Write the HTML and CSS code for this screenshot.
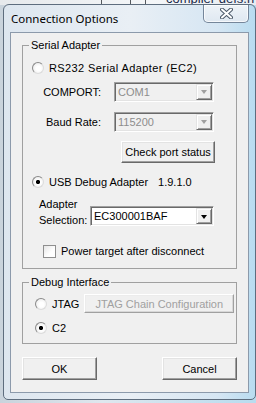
FILE: index.html
```html
<!DOCTYPE html>
<html lang="en">
<head>
    <title>Connection Options</title>
    <meta charset="UTF-8" />
    <link rel="stylesheet" href="styles.css">
</head>
<body>
    <div class="desk-strip">
        <span class="desk-bar bar-a"></span>
        <span class="desk-bar bar-b"></span>
        <span class="desk-bar bar-c"></span>
        <span class="desk-text">compiler defs.h</span>
    </div>

    <div class="window">
        <div class="titlebar">
            <span class="title">Connection Options</span>
            <div class="close-btn">
                <svg width="13" height="11" viewBox="0 0 13 11">
                    <path d="M2 1.5 L11 9.5 M11 1.5 L2 9.5" stroke="#4a5868" stroke-width="4" stroke-linecap="round" />
                    <path d="M2 1.5 L11 9.5 M11 1.5 L2 9.5" stroke="#ffffff" stroke-width="2" stroke-linecap="round" />
                </svg>
            </div>
        </div>

        <div class="client">
            <fieldset class="group serial">
                <legend>Serial Adapter</legend>

                <div class="radio-row rs232">
                    <span class="radio"></span>
                    <span>RS232 Serial Adapter (EC2)</span>
                </div>

                <div class="field-row comport">
                    <span class="field-label">COMPORT:</span>
                    <div class="combo disabled">
                        <span class="combo-text">COM1</span>
                        <span class="combo-arrow"><span class="tri"></span></span>
                    </div>
                </div>

                <div class="field-row baud">
                    <span class="field-label">Baud Rate:</span>
                    <div class="combo disabled">
                        <span class="combo-text">115200</span>
                        <span class="combo-arrow"><span class="tri"></span></span>
                    </div>
                </div>

                <div class="btn-row">
                    <button class="btn btn-check">Check port status</button>
                </div>

                <div class="radio-row usb">
                    <span class="radio checked"></span>
                    <span class="usb-label">USB Debug Adapter</span>
                    <span class="version">1.9.1.0</span>
                </div>

                <div class="adapter-row">
                    <span class="adapter-label">Adapter<br>Selection:</span>
                    <div class="combo adapter-combo">
                        <span class="combo-text">EC300001BAF</span>
                        <span class="combo-arrow"><span class="tri"></span></span>
                    </div>
                </div>

                <div class="check-row">
                    <span class="checkbox"></span>
                    <span>Power target after disconnect</span>
                </div>
            </fieldset>

            <fieldset class="group debug">
                <legend>Debug Interface</legend>

                <div class="radio-row jtag">
                    <span class="radio"></span>
                    <span class="jtag-label">JTAG</span>
                    <button class="btn btn-jtag" disabled>JTAG Chain Configuration</button>
                </div>

                <div class="radio-row c2">
                    <span class="radio checked"></span>
                    <span>C2</span>
                </div>
            </fieldset>

            <div class="dialog-buttons">
                <button class="btn btn-dialog">OK</button>
                <button class="btn btn-dialog">Cancel</button>
            </div>
        </div>
    </div>
</body>
</html>
```

FILE: styles.css
```css
body {
    margin: 0;
    width: 256px;
    height: 403px;
    overflow: hidden;
    position: relative;
    background: linear-gradient(to right, #c9d3dc 0%, #dfe7ee 40%, #b8dcef 100%);
    font-family: 'Liberation Sans', Arial, sans-serif;
    font-size: 11px;
    color: #000;
}

/* bits of the desktop behind the dialog */
.desk-strip {
    position: absolute;
    top: 0;
    left: 0;
    width: 256px;
    height: 5px;
    overflow: hidden;
    background: linear-gradient(to right, #e6e9ec, #f4f6f8 60%, #e8edf2);
}

.desk-bar {
    position: absolute;
    top: 0;
    width: 1px;
    height: 5px;
    background: #55595e;
}

.bar-a { left: 101px; }
.bar-b { left: 130px; }
.bar-c { left: 145px; }

.desk-text {
    position: absolute;
    left: 166px;
    top: -9px;
    font-size: 13px;
    color: #1a2a4a;
    white-space: nowrap;
}

/* window frame */
.window {
    position: absolute;
    left: 3px;
    top: 4px;
    width: 253px;
    box-sizing: border-box;
    border: 1px solid #5e6d7e;
    border-radius: 6px 6px 5px 5px;
    background: linear-gradient(to right, #dde6ef 0%, #e9eff5 50%, #d6e6f3 85%, #b9dcf0 100%);
    padding-bottom: 6px;
}

.titlebar {
    height: 27px;
    display: flex;
    align-items: center;
    padding-left: 7px;
}

.title {
    font-family: 'Noto Sans', 'Open Sans', sans-serif;
    font-size: 11.5px;
    color: #000;
    margin-top: -1px;
}

.close-btn {
    align-self: flex-start;
    margin-left: auto;
    margin-right: 6px;
    width: 46px;
    height: 18px;
    box-sizing: border-box;
    border: 1px solid #75869a;
    border-top: none;
    border-radius: 0 0 5px 5px;
    background: linear-gradient(#eef3f8, #dfe8f1);
    box-shadow: inset 0 0 0 1px rgba(255, 255, 255, 0.7);
    display: flex;
    align-items: center;
    justify-content: center;
}

.close-btn svg {
    margin-top: -1px;
}

.client {
    margin-left: 6px;
    width: 239px;
    box-sizing: border-box;
    border: 1px solid #8c9aab;
    background: #f0f0f0;
    padding-bottom: 12px;
}

/* group boxes */
.group {
    margin: 0 11px;
    padding: 0;
    border: 1px solid #a0a0a0;
    min-inline-size: 0;
}

.group legend {
    margin-left: 6px;
    padding: 0 2px;
    line-height: 13px;
}

.serial {
    margin-top: 6px;
    padding-bottom: 10px;
}

.debug {
    margin-top: 7px;
    padding-bottom: 8px;
}

.radio-row {
    display: flex;
    align-items: center;
    height: 14px;
    white-space: nowrap;
}

.rs232 {
    margin-top: 9px;
    padding-left: 9px;
    letter-spacing: 0.4px;
}

.usb {
    margin-top: 12px;
    padding-left: 9px;
}

.jtag {
    margin-top: 5px;
    height: 19px;
    padding-left: 12px;
}

.c2 {
    margin-top: 8px;
    padding-left: 12px;
}

.radio {
    width: 12px;
    height: 12px;
    box-sizing: border-box;
    border-radius: 50%;
    border: 1px solid;
    border-color: #8a8a8a #dcdcdc #dcdcdc #8a8a8a;
    background: radial-gradient(circle at 55% 55%, #ffffff 30%, #e4e4e4 100%);
    margin-right: 5px;
    flex-shrink: 0;
}

.radio.checked {
    background: radial-gradient(circle, #000 1.8px, transparent 2.4px), radial-gradient(circle at 55% 55%, #ffffff 30%, #e4e4e4 100%);
}

.version {
    margin-left: 10px;
}

.jtag-label {
    margin-right: 5px;
}

/* label + combo rows */
.field-row {
    display: flex;
    align-items: center;
    height: 21px;
}

.comport {
    margin-top: 6px;
}

.baud {
    margin-top: 9px;
}

.field-label {
    width: 78px;
    text-align: right;
    margin-right: 13px;
}

.combo {
    width: 100px;
    height: 20px;
    box-sizing: border-box;
    border: 1px solid;
    border-color: #a0a0a0 #ffffff #ffffff #a0a0a0;
    box-shadow: inset 1px 1px 0 #696969, inset -1px -1px 0 #e3e3e3;
    background: #fff;
    display: flex;
    align-items: center;
    padding: 1px 1px 1px 3px;
}

.combo.disabled {
    background: #f0f0f0;
    color: #8d8d8d;
}

.combo-text {
    flex: 1;
}

.combo-arrow {
    width: 16px;
    height: 16px;
    box-sizing: border-box;
    background: #f0f0f0;
    border: 1px solid;
    border-color: #e3e3e3 #696969 #696969 #e3e3e3;
    box-shadow: inset 1px 1px 0 #fff, inset -1px -1px 0 #a0a0a0;
    display: flex;
    align-items: center;
    justify-content: center;
}

.tri {
    width: 0;
    height: 0;
    border-left: 3.5px solid transparent;
    border-right: 3.5px solid transparent;
    border-top: 4px solid #000;
    margin-top: 1px;
}

.disabled .tri {
    border-top-color: #a0a0a0;
}

.btn-row {
    margin-top: 9px;
    padding-left: 98px;
}

/* push buttons */
.btn {
    font-family: 'Liberation Sans', Arial, sans-serif;
    font-size: 11px;
    color: #000;
    background: #f0f0f0;
    box-sizing: border-box;
    border: 1px solid;
    border-color: #ffffff #696969 #696969 #ffffff;
    box-shadow: inset -1px -1px 0 #a0a0a0, inset 1px 1px 0 #e3e3e3;
    padding: 0;
    margin: 0;
    display: block;
    white-space: nowrap;
}

.btn-check {
    width: 94px;
    height: 22px;
}

.btn-jtag {
    width: 150px;
    height: 19px;
    color: #a0a0a0;
    border-color: #ffffff #a0a0a0 #a0a0a0 #ffffff;
    box-shadow: inset -1px -1px 0 #d8d8d8, inset 1px 1px 0 #ececec;
}

/* adapter selection */
.adapter-row {
    display: flex;
    margin-top: 7px;
    padding-left: 16px;
    height: 32px;
}

.adapter-label {
    width: 51px;
    line-height: 16px;
}

.adapter-combo {
    width: 124px;
    margin-top: 10px;
}

.check-row {
    display: flex;
    align-items: center;
    height: 14px;
    margin-top: 16px;
    padding-left: 20px;
}

.checkbox {
    width: 13px;
    height: 13px;
    box-sizing: border-box;
    border: 1px solid #8f8f8f;
    background: linear-gradient(135deg, #e6e6e6, #ffffff 60%);
    margin-right: 5px;
}

.dialog-buttons {
    display: flex;
    justify-content: space-between;
    margin: 13px 11px 0 11px;
}

.btn-dialog {
    width: 75px;
    height: 23px;
}
```
